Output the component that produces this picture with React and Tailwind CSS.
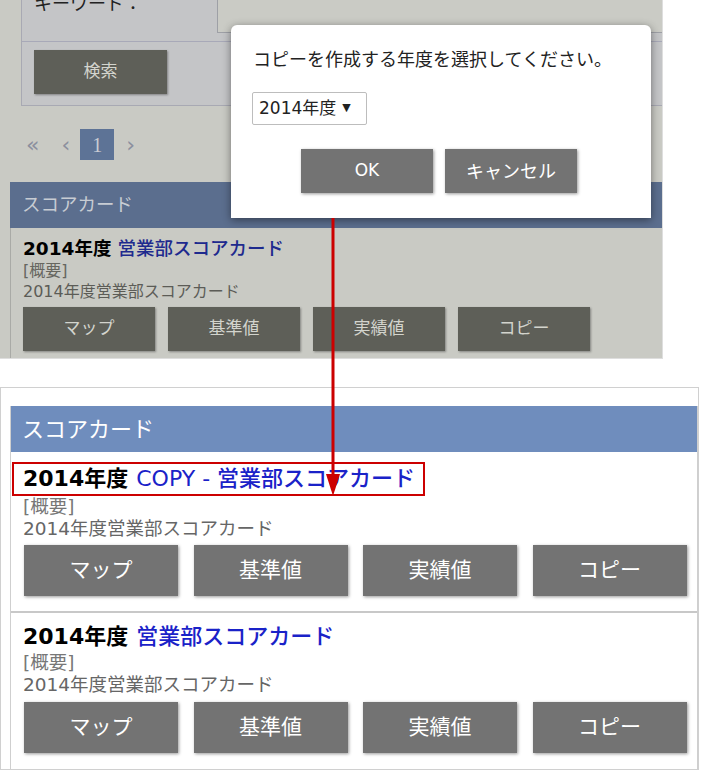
const font = { fontFamily: '"DejaVu Sans", "Noto Sans CJK JP", sans-serif' };

function GreyButton({ label }) {
  return (
    <div className="flex h-[44px] w-[132px] items-center justify-center bg-[#5e5f58] text-[17px] text-[#d3d4cd] shadow-[1px_1px_2px_rgba(0,0,0,0.35)]">
      {label}
    </div>
  );
}

function CardButton({ label }) {
  return (
    <div className="flex h-[51px] w-[154px] items-center justify-center bg-[#737373] text-[21px] text-white shadow-[1px_1px_3px_rgba(0,0,0,0.4)]">
      {label}
    </div>
  );
}

function ScoreCard({ boxed, copy, last }) {
  const title = (
    <div className="flex items-baseline whitespace-nowrap text-[22px] leading-[30px]">
      <span className="font-bold text-black">2014年度</span>
      <span className="ml-[8px] font-medium text-[#1a22c8]">{copy ? 'COPY - 営業部スコアカード' : '営業部スコアカード'}</span>
    </div>
  );
  return (
    <div className={`pb-[15px] ${last ? '' : 'border-b-2 border-[#c8c8c8]'}`}>
      {boxed ? (
        <div className="mt-[10px] ml-[1px] inline-block border-2 border-[#cc0000] pl-[9px] pr-[8px]">{title}</div>
      ) : (
        <div className="pt-[9px] pl-[12px]">{title}</div>
      )}
      <div className="pl-[12px] text-[18.5px] leading-[22px] text-[#777]">[概要]</div>
      <div className="pl-[12px] text-[18.5px] leading-[22px] text-[#666]">2014年度営業部スコアカード</div>
      <div className={`${boxed ? 'mt-[5px]' : 'mt-[6px]'} ml-[13px] flex gap-[15.5px]`}>
        <CardButton label="マップ" />
        <CardButton label="基準値" />
        <CardButton label="実績値" />
        <CardButton label="コピー" />
      </div>
    </div>
  );
}

export default function App() {
  return (
    <div className="relative h-[770px] w-[702px] overflow-hidden bg-white" style={font}>
      {/* top screenshot, dimmed by the dialog overlay */}
      <div className="relative h-[359px] w-[663px] overflow-hidden border-r border-b border-[#dedede] bg-[#c9cac4]">
        <div className="ml-[21px] h-[106px] border-l border-b border-[#a8a9b3] bg-[#c4c5c7]">
          <div className="flex h-[42px] border-b border-[#a8a9b8]">
            <div className="-mt-[8px] ml-[12px] w-[160px] text-[18px] leading-[24px] text-[#222]">キーワード：</div>
            <div className="ml-[23px] h-[33px] flex-1 border-l border-b border-[#9ea0a6] bg-[#cacbc5]" />
          </div>
          <div className="mt-[8px] ml-[12px]">
            <div className="flex h-[44px] w-[133px] items-center justify-center bg-[#5e5f58] text-[17px] text-[#d3d4cd] shadow-[1px_1px_2px_rgba(0,0,0,0.35)]">
              検索
            </div>
          </div>
        </div>
        <div className="mt-[23px] flex h-[31px] items-center text-[22px] text-[#8b8f9e]">
          <span className="ml-[26px]">«</span>
          <span className="ml-[22px]">‹</span>
          <span className="ml-[10px] flex h-[31px] w-[34px] items-center justify-center bg-[#5d7396] text-[20px] text-[#c9ccd3]" style={{ fontFamily: '"Liberation Serif", serif' }}>
            1
          </span>
          <span className="ml-[12px]">›</span>
        </div>
        <div className="mt-[22px] ml-[10px]">
          <div className="flex h-[46px] items-center bg-[#5b6e8e] pl-[12px] text-[18.5px] text-[#c7ccd3]">スコアカード</div>
          <div className="h-[140px] border-l border-[#a9aaa6]">
            <div className="flex items-baseline whitespace-nowrap pt-[10px] pl-[12px] text-[18.5px] leading-[22px]">
              <span className="font-bold text-black">2014年度</span>
              <span className="ml-[6px] font-medium text-[#1e2a8e]">営業部スコアカード</span>
            </div>
            <div className="pl-[12px] text-[16px] leading-[21px] text-[#66665f]">[概要]</div>
            <div className="pl-[12px] text-[16px] leading-[21px] text-[#5c5c57]">2014年度営業部スコアカード</div>
            <div className="mt-[5px] ml-[12px] flex gap-[13px]">
              <GreyButton label="マップ" />
              <GreyButton label="基準値" />
              <GreyButton label="実績値" />
              <GreyButton label="コピー" />
            </div>
          </div>
        </div>

        {/* dialog */}
        <div className="absolute top-[25px] left-[231px] h-[193px] w-[420px] rounded-t-[6px] bg-white shadow-[0_2px_8px_rgba(0,0,0,0.45)]">
          <div className="pt-[24px] pl-[22px] text-[18px] leading-[22px] text-[#222]">コピーを作成する年度を選択してください。</div>
          <div className="mt-[21px] ml-[21px] flex h-[33px] w-[115px] items-center rounded-[2px] border border-[#bdbdbd] pl-[6px] text-[17px] text-[#222]">
            2014年度<span className="ml-[6px] text-[11px]">▼</span>
          </div>
          <div className="mt-[24px] flex justify-center gap-[12px] pr-[4px]">
            <div className="flex h-[44px] w-[132px] items-center justify-center bg-[#737373] text-[17px] text-white shadow-[1px_1px_3px_rgba(0,0,0,0.4)]">OK</div>
            <div className="flex h-[44px] w-[132px] items-center justify-center bg-[#737373] text-[18px] text-white shadow-[1px_1px_3px_rgba(0,0,0,0.4)]">キャンセル</div>
          </div>
        </div>
      </div>

      {/* bottom screenshot */}
      <div className="mt-[28px] h-[383px] w-[699px] border border-[#d0d0d0] pt-[18px] pl-[9px]">
        <div className="h-[363px] border-l border-r border-[#cfcfcf]">
          <div className="flex h-[46px] items-center bg-[#6f8dbd] pl-[11px] text-[22px] text-white">スコアカード</div>
          <ScoreCard boxed copy />
          <ScoreCard last />
        </div>
      </div>

      {/* annotation arrow */}
      <svg className="absolute top-[218px] left-[325px]" width="16" height="280" viewBox="0 0 16 280">
        <line x1="8" y1="0" x2="8" y2="262" stroke="#cc0000" strokeWidth="3" />
        <polygon points="1,256 15,256 8,278" fill="#cc0000" />
      </svg>
    </div>
  );
}
